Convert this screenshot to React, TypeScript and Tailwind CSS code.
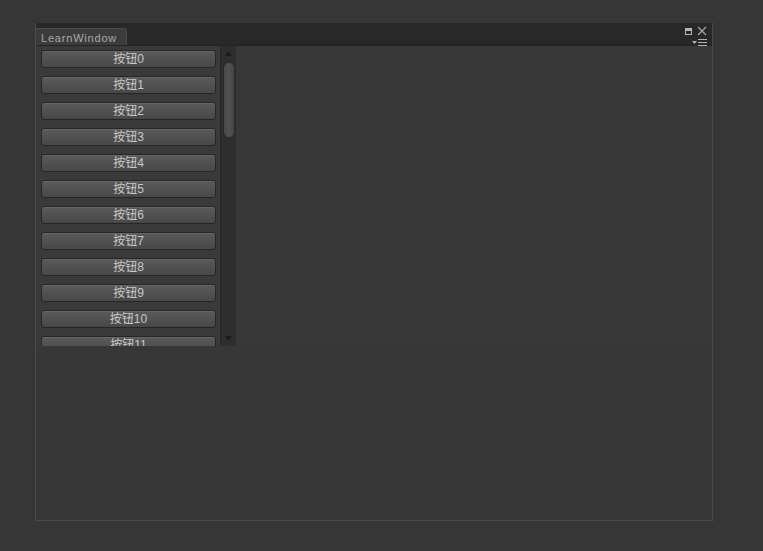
import React from 'react';

const buttons = Array.from({ length: 12 }, (_, i) => `按钮${i}`);

export default function App() {
  return (
    <div className="w-[763px] h-[551px] bg-[#363636] pt-[23px] pl-[35px] overflow-hidden" style={{ fontFamily: '"Liberation Sans", "Noto Sans CJK SC", sans-serif' }}>
      <div className="w-[678px] h-[498px] flex flex-col border-x border-b border-[#4b4b4b] bg-[#383838]">
        {/* Tab bar */}
        <div className="h-[23px] flex items-end bg-[#282828] border-b border-[#222]">
          <div className="h-[17px] w-[91px] bg-[#3c3c3c] rounded-tr-[3px] border-t border-r border-[#4a4a4a] flex items-center pl-[5px] pt-[2px] text-[11px] tracking-[0.8px] text-[#a9a9a9]">
            LearnWindow
          </div>
          <div className="flex-1" />
          <div className="flex flex-col items-end pr-[5px] h-full pt-[3px] gap-[3px]">
            <div className="flex items-center gap-[5px]">
              <svg width="7" height="7" viewBox="0 0 7 7">
                <rect x="0.5" y="0.5" width="6" height="6" fill="none" stroke="#b5b5b5" />
                <rect x="1" y="1" width="5" height="2" fill="#b5b5b5" />
              </svg>
              <svg width="10" height="10" viewBox="0 0 10 10">
                <path d="M1 1L9 9M9 1L1 9" stroke="#a8a8a8" strokeWidth="1.2" />
              </svg>
            </div>
            <div className="flex items-center gap-[1px]">
              <svg width="5" height="4" viewBox="0 0 5 4">
                <path d="M0 0H5L2.5 3Z" fill="#b0b0b0" />
              </svg>
              <svg width="9" height="7" viewBox="0 0 9 7">
                <path d="M0 0.5H9M0 3.5H9M0 6.5H9" stroke="#b0b0b0" strokeWidth="1" />
              </svg>
            </div>
          </div>
        </div>

        {/* Scroll view */}
        <div className="w-[200px] h-[300px] flex bg-[#3a3a3a] overflow-hidden">
          <div className="flex-1 flex flex-col gap-[8px] pt-[4px] pl-[5px] pr-[4px] overflow-hidden">
            {buttons.map((b) => (
              <div
                key={b}
                className="h-[18px] shrink-0 rounded-[3px] border border-[#262626] bg-gradient-to-b from-[#5a5a5a] to-[#484848] shadow-[inset_0_1px_0_#666] flex items-center justify-center text-[12px] text-[#c8c8c8] leading-none"
              >
                {b}
              </div>
            ))}
          </div>
          <div className="w-[16px] h-full bg-[#2e2e2e] border-l border-[#262626] flex flex-col items-center">
            <div className="h-[14px] flex items-center justify-center">
              <svg width="7" height="5" viewBox="0 0 7 5">
                <path d="M3.5 0L7 5H0Z" fill="#1c1c1c" />
              </svg>
            </div>
            <div className="w-[12px] h-[76px] mt-[2px] rounded-full bg-gradient-to-r from-[#484848] via-[#525252] to-[#444] border border-[#2a2a2a]" />
            <div className="flex-1" />
            <div className="h-[16px] flex items-center justify-center">
              <svg width="7" height="5" viewBox="0 0 7 5">
                <path d="M0 0H7L3.5 5Z" fill="#1c1c1c" />
              </svg>
            </div>
          </div>
        </div>
        <div className="flex-1 bg-[#373737]" />
      </div>
    </div>
  );
}
